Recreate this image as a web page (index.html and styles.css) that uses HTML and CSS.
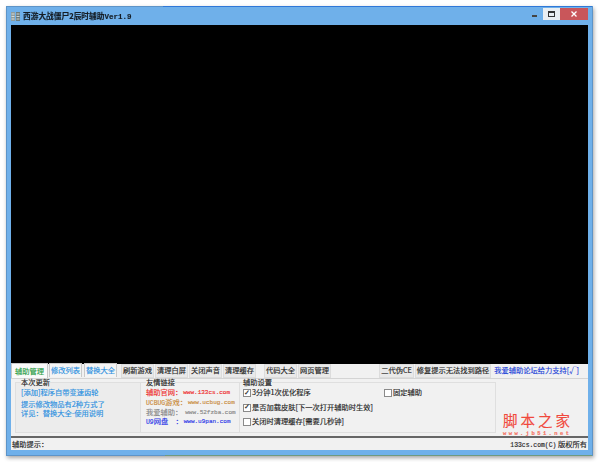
FILE: index.html
```html
<!DOCTYPE html>
<html lang="zh">
<head>
<meta charset="utf-8">
<title>西游大战僵尸2辰时辅助</title>
<link rel="stylesheet" href="styles.css">
</head>
<body>
<div class="window">
  <header class="titlebar">
    <svg class="appicon" width="9" height="9" viewBox="0 0 9 9"><rect x="0" y="0" width="4" height="9" fill="#8f9c9c"/><rect x="5" y="0" width="4" height="9" fill="#6c7a7a"/><path d="M0.5 2h3M0.5 4.5h3M0.5 7h3M5.500 2h3M5.500 4.500h3M5.500 7h3" stroke="#e6ecec" stroke-width=".8"/></svg>
    <span class="title">西游大战僵尸2辰时辅助<span class="ver">Ver1.9</span></span>
    <div class="controls">
      <span class="ctl ctl-min"><i></i></span>
      <span class="ctl ctl-max"><i></i></span>
      <span class="ctl ctl-close"><svg width="6" height="6" viewBox="0 0 6 6"><path d="M.5 .5l5 5M5.500 .5l-5 5" stroke="#fff" stroke-width="1.300"/></svg></span>
    </div>
  </header>
  <div class="client">
    <main class="screen"></main>
    <nav class="toolbar">
      <div class="tabs">
        <span class="tab tab-active">辅助管理</span>
        <span class="tab">修改列表</span>
        <span class="tab">替换大全</span>
      </div>
      <div class="btns b1">
        <span class="btn">刷新游戏</span><span class="btn">清理白屏</span><span class="btn">关闭声音</span><span class="btn">清理缓存</span>
      </div>
      <div class="btns b2">
        <span class="btn">代码大全</span><span class="btn">网页管理</span>
      </div>
      <div class="btns b3">
        <span class="btn">二代伪CE</span><span class="btn">修复提示无法找到路径</span>
      </div>
      <span class="support">我爱辅助论坛给力支持[√]</span>
    </nav>
    <section class="panel">
      <div class="group g1">
        <span class="legend">本次更新</span>
        <p>[添加]程序自带变速齿轮</p>
        <p class="gap">提示修改物品有2种方式了<br>详见：替换大全-使用说明</p>
      </div>
      <div class="group g2">
        <span class="legend">友情链接</span>
        <div class="link red"><span class="lbl">辅助官网：</span><span class="url">www.133cs.com</span></div>
        <div class="link orange"><span class="lbl"><span class="latin">UCBUG</span>游戏：</span><span class="url">www.ucbug.com</span></div>
        <div class="link grey"><span class="lbl">我爱辅助：</span><span class="url">www.52fzba.com</span></div>
        <div class="link navy"><span class="lbl"><span class="latin">U9</span>网盘　：</span><span class="url">www.u9pan.com</span></div>
      </div>
      <div class="group g3">
        <span class="legend">辅助设置</span>
        <div class="opts">
          <label class="opt"><span class="box">✓</span>3分钟1次优化程序</label>
          <label class="opt"><span class="box"></span>固定辅助</label>
          <label class="opt wide"><span class="box">✓</span>是否加载皮肤[下一次打开辅助时生效]</label>
          <label class="opt wide"><span class="box"></span>关闭时清理缓存[需要几秒钟]</label>
        </div>
      </div>
    </section>
    <footer class="status">
      <span>辅助提示：</span>
      <span class="copy"><span class="latin">133cs.com(C)</span> 版权所有</span>
    </footer>
  </div>
  <div class="mark">
    <div class="mark-cn">脚本之家</div>
    <div class="mark-url">www.jb51.net</div>
  </div>
</div>
</body>
</html>
```
FILE: styles.css
```css
* { box-sizing: border-box; }
html, body { margin: 0; height: 462px; background: #fff; overflow: hidden; }
body { padding: 6px 7px 6px 6px; font: 400 7.25px/1 "Noto Sans CJK SC", "Liberation Sans", sans-serif; color: #222; -webkit-text-stroke: .15px currentColor; }
.window {
  position: relative; height: 450px; background: #6fb0ea;
  border: 1px solid #5d94c8; box-shadow: 1px 2px 4px rgba(0,0,0,.35);
  padding: 0 4px 5px 4px; display: flex; flex-direction: column;
  filter: blur(.3px);
}
.window::before { content: ""; position: absolute; left: 156px; right: 0; top: -1px; height: 1px; background: #2f78d8; }
.window::after { content: ""; position: absolute; left: 158px; right: 0; bottom: -1px; height: 1px; background: #6f9a80; }
.titlebar { height: 18px; flex: none; display: flex; align-items: center; }
.appicon { flex: none; margin-top: 1px; }
.title { margin-left: 3px; margin-top: 1px; font-size: 7.7px; font-weight: 700; color: #141c24; white-space: nowrap; }
.ver { font: 700 7.5px "Liberation Mono", monospace; }
.controls { margin-left: auto; display: flex; height: 12px; align-self: flex-start; margin-top: 1px; }
.ctl { display: flex; align-items: center; justify-content: center; }
.ctl-min { width: 17px; }
.ctl-min i { width: 5px; height: 1.500px; background: #444; margin-top: 4px; }
.ctl-max { width: 17px; background: #e9eef2; }
.ctl-max i { width: 7px; height: 6px; border: 1px solid #333; border-top-width: 2px; }
.ctl-close { width: 28px; background: #c9565a; }
.client { flex: 1; min-height: 0; display: flex; flex-direction: column; background: #f1f1f1; }
.screen { height: 339px; flex: none; background: #000; }
.toolbar { height: 15px; flex: none; display: flex; align-items: flex-end; background: #f1f1f1; border-bottom: 1px solid #d4d4d4; }
.tabs { display: flex; gap: 2px; }
.tab { height: 14px; width: 33px; display: flex; align-items: center; justify-content: center; color: #2a8fe0; border: 1px solid #c9c9c9; border-bottom: 0; background: #f4f4f4; }
.tab-active { height: 15px; width: 37px; padding-top: 1px; margin-right: -1px; color: #1f9a3e; background: #fafafa; }
.btns { display: flex; }
.b1 { margin-left: 4px; }
.b2 { margin-left: 7px; }
.b3 { margin-left: auto; }
.btn { height: 14px; padding: 0 1px; margin-right: 1px; display: flex; align-items: center; justify-content: center; background: #e9e9e9; border: 1px solid #dcdcdc; color: #222; white-space: nowrap; }
.support { margin: 0 9px 0 2px; height: 14px; display: flex; align-items: center; color: #1a3fd8; white-space: nowrap; }
.panel { height: 57px; flex: none; display: flex; padding: 2px 4px 3px; background: #f1f1f1; }
.group { position: relative; border: 1px solid #dfdfdf; margin-top: 1px; }
.legend { position: absolute; top: -4.500px; left: 5px; background: #f1f1f1; color: #222; }
.g1 { width: 126px; padding: 4.500px 5px 0; background: #ececec; }
.g1 p { margin: 0; line-height: 9px; color: #2a8fe0; }
.g1 .gap { margin-top: 3px; }
.g2 { width: 99px; padding: 5px 5px 0; border-left: 0; }
.link { display: flex; height: 9.700px; align-items: center; white-space: nowrap; }
.lbl { flex: none; margin-right: 1px; }
.latin { font: 400 6.400px "Liberation Mono", monospace; }
.url { font: 400 6px "Liberation Mono", monospace; }
.red { color: #ee2b2b; }
.orange { color: #c98a3a; }
.orange .lbl { margin-right: 1px; }
.grey .lbl { margin-right: 3px; }
.grey { color: #888; }
.navy { color: #2a36e8; }
.g3 { width: 256px; padding: 2.750px 3px 0; border-left: 0; }
.g3 .legend { left: 3px; }
.opts { display: grid; grid-template-columns: 141px 1fr; grid-auto-rows: 14.500px; }
.opt { display: flex; align-items: center; gap: 1px; color: #222; white-space: nowrap; }
.wide { grid-column: 1 / -1; }
.box { width: 8px; height: 8px; flex: none; background: #fff; border: 1px solid #8a8a8a; display: flex; align-items: center; justify-content: center; font: 700 7px/1 "DejaVu Sans", sans-serif; color: #222; }
.status { flex: 1; display: flex; justify-content: space-between; align-items: center; padding: 2px 1px 0 1px; background: #f1f1f1; border-top: 2px solid #666; color: #222; }
.copy { white-space: nowrap; }
.mark { position: absolute; left: 496px; top: 405px; width: 72px; color: #f0483c; pointer-events: none; }
.mark-cn { font: 14.500px/16px "Noto Sans CJK SC", serif; letter-spacing: 3px; white-space: nowrap; }
.mark-url { font: 700 5.500px/5.500px "Liberation Mono", monospace; letter-spacing: 2.400px; margin-top: 3px; white-space: nowrap; color: #f3705f; }
```
